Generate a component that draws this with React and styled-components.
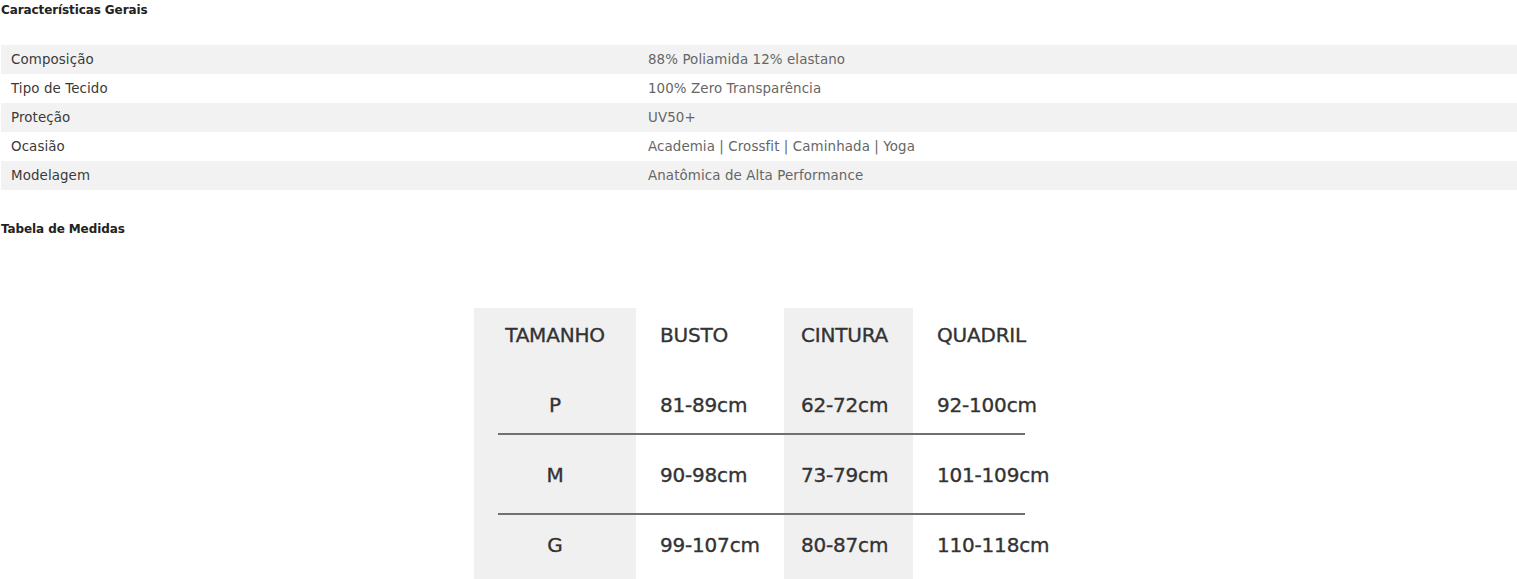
import React from "react";
import styled, { createGlobalStyle } from "styled-components";

const GlobalStyle = createGlobalStyle`
  body {
    margin: 0;
    background: #fff;
    font-family: "DejaVu Sans", "Liberation Sans", sans-serif;
  }
`;

const Page = styled.div`
  display: flex;
  flex-direction: column;
  padding: 0 0 0 1px;
  width: 1516px;
`;

const Title = styled.h3`
  margin: 0;
  font-size: 12px;
  line-height: 20px;
  font-weight: bold;
  color: #222;
  letter-spacing: -0.1px;
`;

const SpecTable = styled.div`
  display: flex;
  flex-direction: column;
  margin: 25px 0 29px 0;
`;

const SpecRow = styled.div`
  display: grid;
  grid-template-columns: 637px 1fr;
  height: 29px;
  align-items: center;
  background: ${(p) => (p.$striped ? "#f2f2f2" : "#fff")};
  font-size: 13.4px;
  letter-spacing: 0.1px;
`;

const SpecLabel = styled.span`
  padding-left: 10px;
  color: #3a3a3a;
`;

const SpecValue = styled.span`
  padding-left: 10px;
  color: #666;
`;

const SizeWrap = styled.div`
  display: flex;
  justify-content: flex-start;
  padding: 69px 0 0 473px;
`;

const SizeTable = styled.div`
  display: flex;
  flex-direction: column;
  width: 571px;
  background: linear-gradient(
    to right,
    #f0f0f0 0 162px,
    #fff 162px 310px,
    #f0f0f0 310px 439px,
    #fff 439px
  );
  font-family: "DejaVu Sans", sans-serif;
  color: #333;
`;

const SizeRow = styled.div`
  display: grid;
  grid-template-columns: 162px 148px 129px 132px;
  height: ${(p) => p.$h}px;
  padding-top: ${(p) => p.$pt}px;
  box-sizing: border-box;
  align-items: start;
`;

const SizeCell = styled.span`
  font-size: 20px;
  line-height: 28px;
  white-space: nowrap;
  text-align: ${(p) => (p.$center ? "center" : "left")};
  padding-left: ${(p) => p.$pl || 0}px;
  letter-spacing: -0.2px;
  -webkit-text-stroke: 0.35px #333;
`;

const Divider = styled.div`
  height: 2px;
  margin: 0 20px 0 24px;
  background: #707070;
`;

const specs = [
  ["Composição", "88% Poliamida 12% elastano"],
  ["Tipo de Tecido", "100% Zero Transparência"],
  ["Proteção", "UV50+"],
  ["Ocasião", "Academia | Crossfit | Caminhada | Yoga"],
  ["Modelagem", "Anatômica de Alta Performance"],
];

const rows = [
  { cells: ["P", "81-89cm", "62-72cm", "92-100cm"], h: 71, pt: 29 },
  { cells: ["M", "90-98cm", "73-79cm", "101-109cm"], h: 78, pt: 26 },
  { cells: ["G", "99-107cm", "80-87cm", "110-118cm"], h: 64, pt: 16 },
];

const pads = [0, 24, 17, 24];

export default function App() {
  return (
    <Page>
      <GlobalStyle />
      <Title>Características Gerais</Title>
      <SpecTable>
        {specs.map(([label, value], i) => (
          <SpecRow key={label} $striped={i % 2 === 0}>
            <SpecLabel>{label}</SpecLabel>
            <SpecValue>{value}</SpecValue>
          </SpecRow>
        ))}
      </SpecTable>
      <Title>Tabela de Medidas</Title>
      <SizeWrap>
        <SizeTable>
          <SizeRow $h={54} $pt={13}>
            <SizeCell $center>TAMANHO</SizeCell>
            <SizeCell $pl={24}>BUSTO</SizeCell>
            <SizeCell $pl={17}>CINTURA</SizeCell>
            <SizeCell $pl={24}>QUADRIL</SizeCell>
          </SizeRow>
          {rows.map((row, r) => (
            <React.Fragment key={row.cells[0]}>
              {r > 0 && <Divider />}
              <SizeRow $h={row.h} $pt={row.pt}>
                {row.cells.map((c, i) => (
                  <SizeCell key={i} $center={i === 0} $pl={pads[i]}>
                    {c}
                  </SizeCell>
                ))}
              </SizeRow>
            </React.Fragment>
          ))}
        </SizeTable>
      </SizeWrap>
    </Page>
  );
}
